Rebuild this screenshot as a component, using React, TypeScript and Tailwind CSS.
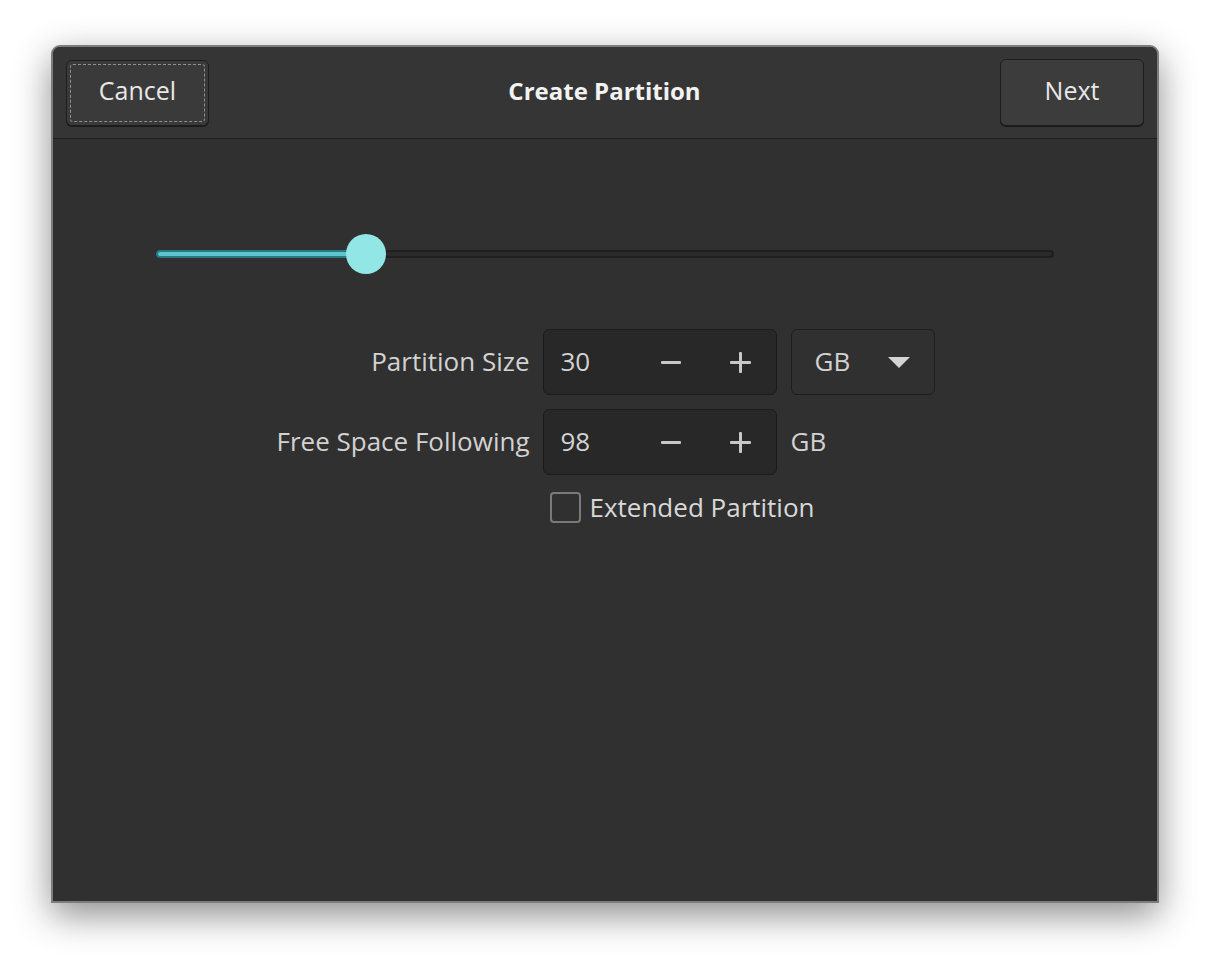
import { useState } from "react";

function Spin({ value }: { value: number }) {
  return (
    <div className="flex h-[66px] w-[234px] items-center rounded-[6px] border border-[#1c1c1c] bg-[#282828] pl-[17px] text-[#d2d2d2]">
      <span className="flex-1 pb-[2px]">{value}</span>
      <div className="flex w-[140px] items-center">
        <span className="flex w-[70px] justify-center">
          <span className="block h-[3px] w-[20px] rounded-[1px] bg-[#c8c8c8]" />
        </span>
        <span className="flex w-[70px] justify-center">
          <span className="relative block h-[21px] w-[21px]">
            <span className="absolute left-0 top-[9px] h-[3px] w-[21px] rounded-[1px] bg-[#c8c8c8]" />
            <span className="absolute left-[9px] top-0 h-[21px] w-[3px] rounded-[1px] bg-[#c8c8c8]" />
          </span>
        </span>
      </div>
    </div>
  );
}

export default function App() {
  const [extended, setExtended] = useState(false);
  const pct = 210 / 898;

  return (
    <div
      className="h-[960px] w-[1210px] overflow-hidden bg-white pl-[51px] pt-[45px] text-[26px]"
      style={{ fontFamily: '"Open Sans", "Noto Sans", sans-serif' }}
    >
      <div className="flex h-[858px] w-[1108px] flex-col overflow-hidden rounded-t-[9px] border-2 border-[#7c7c7c] bg-[#303030] shadow-[0_12px_36px_rgba(0,0,0,0.45)]">
        <div className="flex h-[92px] shrink-0 items-center justify-between border-b border-[#1f1f1f] bg-[#353535] px-[13px]">
          <button className="h-[66px] w-[143px] rounded-[6px] border border-[#1e1e1e] bg-[#3a3a3a] p-[3px] text-[25px] text-[#e8e8e8] shadow-[0_1px_0_#1a1a1a]">
            <span className="flex h-full w-full items-center justify-center rounded-[3px] border border-dashed border-[#909090] pb-[4px]">
              Cancel
            </span>
          </button>
          <div className="pb-[4px] text-[24px] font-bold text-[#f2f2f2]">Create Partition</div>
          <button className="h-[67px] w-[144px] rounded-[6px] border border-[#1e1e1e] bg-[#3c3c3c] pb-[4px] text-[25px] text-[#e8e8e8] shadow-[0_1px_0_#1a1a1a]">
            Next
          </button>
        </div>

        <div className="flex flex-1 flex-col">
          <div className="relative mx-auto mt-[95px] h-[40px] w-[898px]">
            <div className="absolute left-0 right-0 top-[16px] h-[8px] rounded-full border-2 border-[#1f1f1f] bg-[#2a2a2a]" />
            <div
              className="absolute left-0 top-[16px] h-[8px] rounded-full border-2 border-[#267a86] bg-[#5ec5d0]"
              style={{ width: `${pct * 100}%` }}
            />
            <div
              className="absolute top-0 h-[40px] w-[40px] -translate-x-1/2 rounded-full bg-[#93e6e6]"
              style={{ left: `${pct * 100}%` }}
            />
          </div>

          <div className="mx-auto mt-[55px] grid grid-cols-[253px_234px_144px] items-center gap-y-[14px] [column-gap:13px]">
            <div className="whitespace-nowrap pb-[2px] text-right text-[#d2d2d2]">Partition Size</div>
            <Spin value={30} />
            <div className="ml-[1px] flex h-[66px] w-[144px] items-center rounded-[6px] border border-[#1e1e1e] bg-[#303030] pl-[23px] pr-[24px] text-[#d2d2d2]">
              <span className="flex-1 pb-[2px]">GB</span>
              <svg width="22" height="11" viewBox="0 0 22 11">
                <path d="M0 0 L22 0 L11 11 Z" fill="#d4d4d4" />
              </svg>
            </div>

            <div className="whitespace-nowrap pb-[2px] text-right text-[#d2d2d2]">Free Space Following</div>
            <Spin value={98} />
            <div className="ml-[1px] pb-[2px] text-[#d2d2d2]">GB</div>

            <div />
            <label className="col-span-2 -mt-[1px] flex cursor-pointer items-center gap-[9px] pl-[7px] text-[#d8d8d8]">
              <input
                type="checkbox"
                checked={extended}
                onChange={(e) => setExtended(e.target.checked)}
                className="h-[31px] w-[31px] appearance-none rounded-[4px] border-2 border-[#7a7a7a] bg-transparent"
              />
              <span>Extended Partition</span>
            </label>
          </div>
        </div>
      </div>
    </div>
  );
}
